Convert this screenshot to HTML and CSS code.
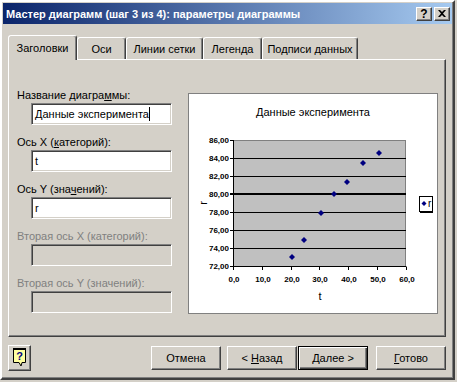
FILE: index.html
```html
<!DOCTYPE html>
<html lang="ru">
<head>
    <meta charset="UTF-8">
    <meta name="viewport" content="width=device-width, initial-scale=1.0">
    <title>Мастер диаграмм</title>
    <link rel="stylesheet" href="styles.css">
</head>
<body>
    <div class="window">
        <div class="titlebar">
            <span class="title">Мастер диаграмм (шаг 3 из 4): параметры диаграммы</span>
            <div class="caption-buttons">
                <button class="cap-btn">?</button>
                <button class="cap-btn">
                    <svg width="8" height="7" viewBox="0 0 8 7">
                        <path d="M0 0 L2 0 L4 2 L6 0 L8 0 L5 3.5 L8 7 L6 7 L4 5 L2 7 L0 7 L3 3.5 Z" fill="#000"/>
                    </svg>
                </button>
            </div>
        </div>

        <div class="content">
            <div class="tabs">
                <div class="tab active tab-titles">Заголовки</div>
                <div class="tab tab-axes">Оси</div>
                <div class="tab tab-grid">Линии сетки</div>
                <div class="tab tab-legend">Легенда</div>
                <div class="tab tab-labels">Подписи данных</div>
            </div>

            <div class="panel">
                <div class="fields">
                    <div class="field">
                        <label>Название диагра<u>м</u>мы:</label>
                        <div class="input">Данные эксперимента<span class="caret"></span></div>
                    </div>
                    <div class="field">
                        <label>Ось X (<u>к</u>атегорий):</label>
                        <div class="input">t</div>
                    </div>
                    <div class="field">
                        <label>Ось Y (зна<u>ч</u>ений):</label>
                        <div class="input">r</div>
                    </div>
                    <div class="field disabled">
                        <label>Вторая ось X (категорий):</label>
                        <div class="input"></div>
                    </div>
                    <div class="field disabled">
                        <label>Вторая ось Y (значений):</label>
                        <div class="input"></div>
                    </div>
                </div>

                <div class="chart">
                    <svg width="250" height="221" viewBox="0 0 250 221">
                        <rect x="0.5" y="0.5" width="249" height="220" fill="#fff" stroke="#808080"/>
                        <text x="125" y="23" text-anchor="middle" class="chart-title">Данные эксперимента</text>

                        <rect x="45.5" y="47.5" width="172" height="126" fill="#c0c0c0" stroke="#808080"/>
                        <g stroke="#000">
                            <line x1="45" x2="218" y1="65.5" y2="65.5"/>
                            <line x1="45" x2="218" y1="83.5" y2="83.5"/>
                            <line x1="45" x2="218" y1="101" y2="101" stroke-width="2"/>
                            <line x1="45" x2="218" y1="119.5" y2="119.5"/>
                            <line x1="45" x2="218" y1="137.5" y2="137.5"/>
                            <line x1="45" x2="218" y1="155.5" y2="155.5"/>
                            <line x1="45.5" x2="45.5" y1="47" y2="174"/>
                            <line x1="45" x2="218.5" y1="173.5" y2="173.5"/>
                            <!-- y ticks -->
                            <line x1="42" x2="45" y1="47.5" y2="47.5"/>
                            <line x1="42" x2="45" y1="65.5" y2="65.5"/>
                            <line x1="42" x2="45" y1="83.5" y2="83.5"/>
                            <line x1="42" x2="45" y1="101" y2="101" stroke-width="2"/>
                            <line x1="42" x2="45" y1="119.5" y2="119.5"/>
                            <line x1="42" x2="45" y1="137.5" y2="137.5"/>
                            <line x1="42" x2="45" y1="155.5" y2="155.5"/>
                            <line x1="42" x2="45" y1="173.5" y2="173.5"/>
                            <!-- x ticks -->
                            <line x1="45.5" x2="45.5" y1="174" y2="177"/>
                            <line x1="74.5" x2="74.5" y1="174" y2="177"/>
                            <line x1="103.5" x2="103.5" y1="174" y2="177"/>
                            <line x1="131.5" x2="131.5" y1="174" y2="177"/>
                            <line x1="160.5" x2="160.5" y1="174" y2="177"/>
                            <line x1="189.5" x2="189.5" y1="174" y2="177"/>
                            <line x1="218.5" x2="218.5" y1="174" y2="177"/>
                        </g>

                        <g class="tick-label" text-anchor="end">
                            <text x="41" y="50">86,00</text>
                            <text x="41" y="68">84,00</text>
                            <text x="41" y="86">82,00</text>
                            <text x="41" y="104">80,00</text>
                            <text x="41" y="122">78,00</text>
                            <text x="41" y="140">76,00</text>
                            <text x="41" y="158">74,00</text>
                            <text x="41" y="176">72,00</text>
                        </g>
                        <g class="tick-label" text-anchor="middle">
                            <text x="46" y="189">0,0</text>
                            <text x="75" y="189">10,0</text>
                            <text x="104" y="189">20,0</text>
                            <text x="132" y="189">30,0</text>
                            <text x="161" y="189">40,0</text>
                            <text x="190" y="189">50,0</text>
                            <text x="219" y="189">60,0</text>
                        </g>

                        <text x="132" y="207" text-anchor="middle" class="axis-title">t</text>
                        <text text-anchor="middle" class="axis-title" transform="translate(19 110) rotate(-90)">r</text>

                        <g fill="#000080">
                            <path d="M104 161 l3 3 l-3 3 l-3 -3 Z"/>
                            <path d="M116 144 l3 3 l-3 3 l-3 -3 Z"/>
                            <path d="M133 117 l3 3 l-3 3 l-3 -3 Z"/>
                            <path d="M146 98 l3 3 l-3 3 l-3 -3 Z"/>
                            <path d="M159 86 l3 3 l-3 3 l-3 -3 Z"/>
                            <path d="M175 67 l3 3 l-3 3 l-3 -3 Z"/>
                            <path d="M191 57 l3 3 l-3 3 l-3 -3 Z"/>
                        </g>

                        <rect x="231.5" y="103.5" width="13" height="15" fill="#fff" stroke="#000"/>
                        <line x1="232" x2="245" y1="119.5" y2="119.5" stroke="#000"/>
                        <path d="M236 108 l2.5 2.5 l-2.5 2.5 l-2.5 -2.5 Z" fill="#000080"/>
                        <text x="240" y="114" class="legend-text">r</text>
                    </svg>
                </div>
            </div>

            <div class="footer">
                <button class="help-btn">
                    <svg width="14" height="20" viewBox="0 0 14 20">
                        <path d="M0.5 0.5 H12.5 V14.5 H9 L8 18 L6 14.5 H0.5 Z" fill="#ffffa0" stroke="#000"/>
                        <rect x="0" y="0" width="13" height="2" fill="#000"/>
                        <text x="6.5" y="12" text-anchor="middle" class="help-mark">?</text>
                    </svg>
                </button>
                <div class="wizard-buttons">
                    <button class="btn btn-cancel">Отмена</button>
                    <button class="btn btn-back">&lt; <u>Н</u>азад</button>
                    <button class="btn btn-next default">Далее &gt;</button>
                    <button class="btn btn-finish"><u>Г</u>отово</button>
                </div>
            </div>
        </div>
    </div>
</body>
</html>
```

FILE: styles.css
```css
body {
    margin: 0;
    background-color: #d4d0c8;
    font-family: "Liberation Sans", Arial, sans-serif;
    font-size: 11px;
    color: #000;
}
.window {
    box-sizing: border-box;
    width: 455px;
    height: 380px;
    padding: 1px;
    background-color: #d4d0c8;
    border: 2px solid;
    border-color: #ffffff #404040 #404040 #ffffff;
    box-shadow: inset -1px -1px 0 #808080;
}
.titlebar {
    display: flex;
    align-items: center;
    height: 21px;
    padding: 0 2px 0 3px;
    background: linear-gradient(to right, #0a246a, #a6caf0);
}
.title {
    flex: 1;
    color: #fff;
    font-weight: bold;
    font-size: 11px;
    white-space: nowrap;
}
.caption-buttons {
    display: flex;
    gap: 2px;
}
.cap-btn {
    box-sizing: border-box;
    width: 16px;
    height: 14px;
    padding: 0;
    display: flex;
    align-items: center;
    justify-content: center;
    background-color: #d4d0c8;
    border: 1px solid;
    border-color: #fff #404040 #404040 #fff;
    box-shadow: inset -1px -1px 0 #808080;
    font-family: "Liberation Sans", Arial, sans-serif;
    font-weight: bold;
    font-size: 12px;
    line-height: 12px;
    color: #000;
}
.content {
    padding: 0 6px 0 5px;
}
.tabs {
    display: flex;
    align-items: flex-end;
    height: 24px;
    margin-top: 11px;
}
.tab {
    position: relative;
    box-sizing: border-box;
    height: 22px;
    display: flex;
    align-items: center;
    justify-content: center;
    border: 1px solid;
    border-bottom: none;
    border-color: #fff #404040 transparent #fff;
    border-radius: 3px 3px 0 0;
    box-shadow: inset -1px 0 0 #808080;
    padding-top: 1px;
}
.tab.active {
    height: 25px;
    margin-bottom: -1px;
    background-color: #d4d0c8;
    z-index: 1;
    padding-bottom: 2px;
}
.tab-titles { width: 69px; }
.tab-axes { width: 49px; }
.tab-grid { width: 77px; }
.tab-legend { width: 59px; }
.tab-labels { width: 96px; }
.panel {
    box-sizing: border-box;
    display: flex;
    height: 278px;
    padding: 28px 0 0 8px;
    border: 1px solid;
    border-color: #fff #404040 #404040 #fff;
    box-shadow: inset -1px -1px 0 #808080;
}
.fields {
    width: 171px;
}
.field {
    margin-bottom: 10px;
}
.field label {
    display: block;
    height: 14px;
    line-height: 14px;
    margin-bottom: 1px;
    white-space: nowrap;
}
.input {
    box-sizing: border-box;
    width: 141px;
    height: 22px;
    margin-left: 14px;
    padding: 0 0 0 3px;
    display: flex;
    align-items: center;
    background-color: #fff;
    border: 1px solid;
    border-color: #808080 #fff #fff #808080;
    box-shadow: inset 1px 1px 0 #404040, inset -1px -1px 0 #d4d0c8;
    white-space: nowrap;
}
.caret {
    display: inline-block;
    width: 1px;
    height: 14px;
    background-color: #000;
}
.field.disabled label {
    color: #808080;
}
.field.disabled .input {
    background-color: #d4d0c8;
}
.chart {
    margin-top: 5px;
    height: 221px;
}
.chart svg {
    display: block;
}
.chart-title {
    font-family: "Liberation Sans", Arial, sans-serif;
    font-size: 11px;
}
.tick-label {
    font-family: "Liberation Sans", Arial, sans-serif;
    font-size: 8px;
    font-weight: bold;
}
.axis-title {
    font-family: "Liberation Sans", Arial, sans-serif;
    font-size: 11px;
}
.legend-text {
    font-family: "Liberation Sans", Arial, sans-serif;
    font-size: 10px;
}
.footer {
    display: flex;
    align-items: center;
    justify-content: space-between;
    margin-top: 8px;
}
.help-btn {
    box-sizing: border-box;
    width: 23px;
    height: 26px;
    padding: 0;
    display: flex;
    align-items: center;
    justify-content: center;
    background-color: #d4d0c8;
    border: 1px solid;
    border-color: #fff #404040 #404040 #fff;
    box-shadow: inset -1px -1px 0 #808080;
}
.help-mark {
    font-family: "Liberation Sans", Arial, sans-serif;
    font-size: 11px;
    font-weight: bold;
    fill: #000080;
}
.wizard-buttons {
    display: flex;
}
.btn {
    box-sizing: border-box;
    width: 70px;
    height: 24px;
    padding: 0;
    background-color: #d4d0c8;
    border: 1px solid;
    border-color: #fff #404040 #404040 #fff;
    box-shadow: inset -1px -1px 0 #808080;
    font-family: "Liberation Sans", Arial, sans-serif;
    font-size: 11px;
    color: #000;
}
.btn-back {
    margin-left: 6px;
}
.btn-next {
    margin-left: 1px;
}
.btn-finish {
    margin-left: 8px;
}
.btn.default {
    border: 1px solid #000;
    box-shadow: inset 1px 1px 0 #fff, inset -1px -1px 0 #404040, inset -2px -2px 0 #808080;
}
```
